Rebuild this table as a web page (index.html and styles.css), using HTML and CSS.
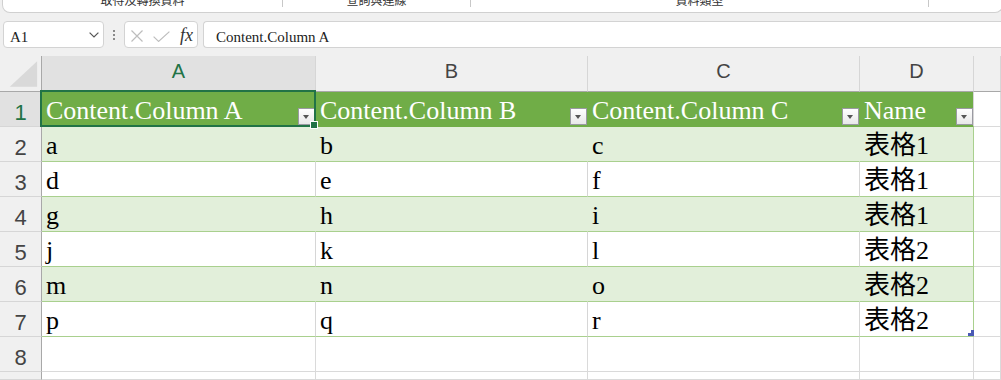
FILE: index.html
```html
<!DOCTYPE html>
<html lang="zh-Hant">
<head>
<meta charset="utf-8">
<title>Sheet</title>
<link rel="stylesheet" href="styles.css">
</head>
<body>
<div class="ribbon">
  <div class="grp g1"><span class="glabel">取得及轉換資料</span></div>
  <div class="sep"></div>
  <div class="grp g2"><span class="glabel">查詢與連線</span></div>
  <div class="sep"></div>
  <div class="grp g3"><span class="glabel">資料類型</span></div>
  <div class="sep"></div>
  <div class="grp g4"></div>
</div>

<div class="fbar">
  <div class="namebox">
    <span class="ftext">A1</span>
    <svg class="chev" width="10" height="6" viewBox="0 0 10 6"><path d="M0.6 0.6 L5 5 L9.4 0.6" stroke="#555" fill="none" stroke-width="1.2"/></svg>
  </div>
  <div class="dots"><i></i><i></i><i></i></div>
  <div class="fxbox">
    <svg class="ico-x" width="12" height="12" viewBox="0 0 12 12"><path d="M0.5 0.5 L11.5 11.5 M11.5 0.5 L0.5 11.5" stroke="#bdbdbd" stroke-width="1.2" fill="none"/></svg>
    <svg class="ico-ok" width="17" height="11" viewBox="0 0 17 11"><path d="M0.6 5.6 L5.6 10.4 L16.4 0.6" stroke="#bdbdbd" stroke-width="1.2" fill="none"/></svg>
    <span class="fx">fx</span>
  </div>
  <div class="finput"><span class="ftext">Content.Column A</span></div>
</div>

<div class="sheet">
  <!-- header row -->
  <div class="c corner"><svg width="42" height="35" viewBox="0 0 42 35"><polygon points="10,31 38,31 38,5" fill="#d9d9d9"/></svg></div>
  <div class="c ch sel">A</div>
  <div class="c ch">B</div>
  <div class="c ch">C</div>
  <div class="c ch">D</div>
  <div class="c ch"></div>

  <!-- row 1 -->
  <div class="c rh sel">1</div>
  <div class="c hd"><span>Content.Column A</span><span class="dd"></span><div class="selbox"><span class="handle"></span></div></div>
  <div class="c hd"><span>Content.Column B</span><span class="dd"></span></div>
  <div class="c hd"><span>Content.Column C</span><span class="dd"></span></div>
  <div class="c hd last"><span>Name</span><span class="dd"></span></div>
  <div class="c"></div>

  <!-- row 2 -->
  <div class="c rh">2</div>
  <div class="c bd">a</div>
  <div class="c bd">b</div>
  <div class="c bd">c</div>
  <div class="c bd last">表格1</div>
  <div class="c"></div>

  <!-- row 3 -->
  <div class="c rh">3</div>
  <div class="c wt">d</div>
  <div class="c wt">e</div>
  <div class="c wt">f</div>
  <div class="c wt last">表格1</div>
  <div class="c"></div>

  <!-- row 4 -->
  <div class="c rh">4</div>
  <div class="c bd">g</div>
  <div class="c bd">h</div>
  <div class="c bd">i</div>
  <div class="c bd last">表格1</div>
  <div class="c"></div>

  <!-- row 5 -->
  <div class="c rh">5</div>
  <div class="c wt">j</div>
  <div class="c wt">k</div>
  <div class="c wt">l</div>
  <div class="c wt last">表格2</div>
  <div class="c"></div>

  <!-- row 6 -->
  <div class="c rh">6</div>
  <div class="c bd">m</div>
  <div class="c bd">n</div>
  <div class="c bd">o</div>
  <div class="c bd last">表格2</div>
  <div class="c"></div>

  <!-- row 7 -->
  <div class="c rh">7</div>
  <div class="c wt">p</div>
  <div class="c wt">q</div>
  <div class="c wt">r</div>
  <div class="c wt last">表格2<svg class="rsz" width="6" height="6" viewBox="0 0 6 6"><polygon points="3,0 6,0 6,6 0,6 0,3 3,3" fill="#4a5ab5"/></svg></div>
  <div class="c"></div>

  <!-- row 8 -->
  <div class="c rh">8</div>
  <div class="c"></div>
  <div class="c"></div>
  <div class="c"></div>
  <div class="c"></div>
  <div class="c"></div>

  <!-- row 9 (partly visible) -->
  <div class="c rh"></div>
  <div class="c"></div>
  <div class="c"></div>
  <div class="c"></div>
  <div class="c"></div>
  <div class="c"></div>
</div>
</body>
</html>
```

FILE: styles.css
```css
html, body {
  margin: 0;
  padding: 0;
}
body {
  width: 1001px;
  height: 380px;
  overflow: hidden;
  background: #f0f0f0;
  font-family: "Liberation Sans", "Noto Sans CJK TC", sans-serif;
}

/* ribbon strip */
.ribbon {
  margin-left: 2px;
  width: 999px;
  height: 12px;
  box-sizing: content-box;
  background: #ffffff;
  border: 1px solid #d0d0d0;
  border-top: none;
  border-radius: 0 0 8px 8px;
  display: flex;
  overflow: hidden;
}
.grp {
  display: flex;
  justify-content: center;
  overflow: hidden;
}
.g1 { width: 279px; }
.g2 { width: 187px; }
.g3 { width: 457px; }
.g4 { flex: 1; }
.glabel {
  font-family: "Noto Sans CJK TC", sans-serif;
  font-size: 12px;
  line-height: 12px;
  color: #333;
  margin-top: -6px;
  white-space: nowrap;
}
.sep {
  width: 1px;
  height: 7px;
  background: #c8c8c8;
}

/* formula bar */
.fbar {
  margin-top: 8px;
  height: 27px;
  display: flex;
  padding-left: 3px;
}
.namebox {
  width: 101px;
  box-sizing: border-box;
  background: #fff;
  border: 1px solid #d3d3d3;
  border-radius: 4px;
  display: flex;
  align-items: center;
  justify-content: space-between;
  padding: 0 4px 0 6px;
}
.ftext {
  font-family: "Liberation Serif", serif;
  font-size: 15px;
  line-height: 17px;
  color: #222;
  margin-top: 5px;
  white-space: nowrap;
}
.chev { margin-top: 1px; }
.dots {
  width: 20px;
  display: flex;
  flex-direction: column;
  align-items: center;
  justify-content: center;
  gap: 2px;
}
.dots i {
  display: block;
  width: 2px;
  height: 2px;
  background: #8a8a8a;
}
.fxbox {
  width: 74px;
  box-sizing: border-box;
  background: #fff;
  border: 1px solid #d3d3d3;
  border-radius: 4px;
  display: flex;
  align-items: center;
  padding-left: 6px;
}
.ico-x { margin-right: 10px; margin-top: 3px; }
.ico-ok { margin-right: 10px; margin-top: 3px; }
.fx {
  font-family: "Liberation Serif", serif;
  font-style: italic;
  font-size: 18px;
  line-height: 18px;
  color: #333;
  margin-top: 1px;
}
.finput {
  flex: 1;
  margin-left: 5px;
  background: #fff;
  border: 1px solid #d3d3d3;
  border-right: none;
  border-radius: 4px 0 0 4px;
  display: flex;
  align-items: center;
  padding-left: 12px;
}

/* sheet grid */
.sheet {
  margin-top: 8px;
  display: grid;
  grid-template-columns: 42px 274px 272px 272px 114px 1fr;
  grid-template-rows: 36px repeat(8, 35px) 8px;
  background: #fff;
}
.c {
  position: relative;
  box-sizing: border-box;
  min-width: 0;
  border-right: 1px solid #dadada;
  border-bottom: 1px solid #dadada;
  display: flex;
  align-items: flex-end;
  padding-left: 4px;
  font-family: "Liberation Serif", "Noto Sans CJK TC", serif;
  font-size: 26px;
  line-height: 30px;
  color: #000;
  white-space: nowrap;
  overflow: visible;
}
.corner {
  padding: 0;
  background: #f0f0f0;
  border-right-color: #a8a8a8;
  border-bottom-color: #a8a8a8;
  align-items: flex-start;
}
.corner svg { display: block; }
.ch {
  background: #f0f0f0;
  border-bottom-color: #a8a8a8;
  border-right-color: #d6d6d6;
  justify-content: center;
  align-items: center;
  padding: 0 0 5px 0;
  font-family: "Liberation Sans", sans-serif;
  font-size: 20px;
  line-height: 20px;
  color: #444;
}
.ch.sel {
  background: #e1e1e1;
  color: #217346;
}
.rh {
  background: #f0f0f0;
  border-right-color: #a8a8a8;
  border-bottom-color: #d6d6d6;
  justify-content: center;
  padding: 0;
  font-family: "Liberation Sans", sans-serif;
  font-size: 22px;
  line-height: 26px;
  color: #444;
}
.rh.sel {
  background: #e1e1e1;
  color: #217346;
}

/* table styles */
.hd {
  background: #70ad47;
  border-right-color: #70ad47;
  border-bottom-color: #70ad47;
  color: #fff;
}
.bd {
  background: #e2efda;
  border-right-color: #e2efda;
  border-bottom-color: #a9d08e;
}
.wt {
  background: #fff;
  border-right-color: #d6d6d6;
  border-bottom-color: #a9d08e;
}
.last { border-right-color: #a9d08e; }
.hd.last { border-right-color: #d6d6d6; }

.dd {
  position: absolute;
  right: 0;
  bottom: 1px;
  width: 17px;
  height: 17px;
  box-sizing: border-box;
  border: 1px solid #9a9aa2;
  background: linear-gradient(#ffffff, #e8e8e8);
}
.dd::after {
  content: "";
  position: absolute;
  left: 4px;
  top: 6px;
  border-left: 3.5px solid transparent;
  border-right: 3.5px solid transparent;
  border-top: 4px solid #555;
}

.selbox {
  position: absolute;
  top: -2px;
  left: -2px;
  right: -1px;
  bottom: -1px;
  border: 2px solid #217346;
  z-index: 2;
}
.handle {
  position: absolute;
  right: -4px;
  bottom: -4px;
  width: 6px;
  height: 6px;
  background: #217346;
  border: 1px solid #fff;
}
.rsz {
  position: absolute;
  right: -1px;
  bottom: 0;
}
```
